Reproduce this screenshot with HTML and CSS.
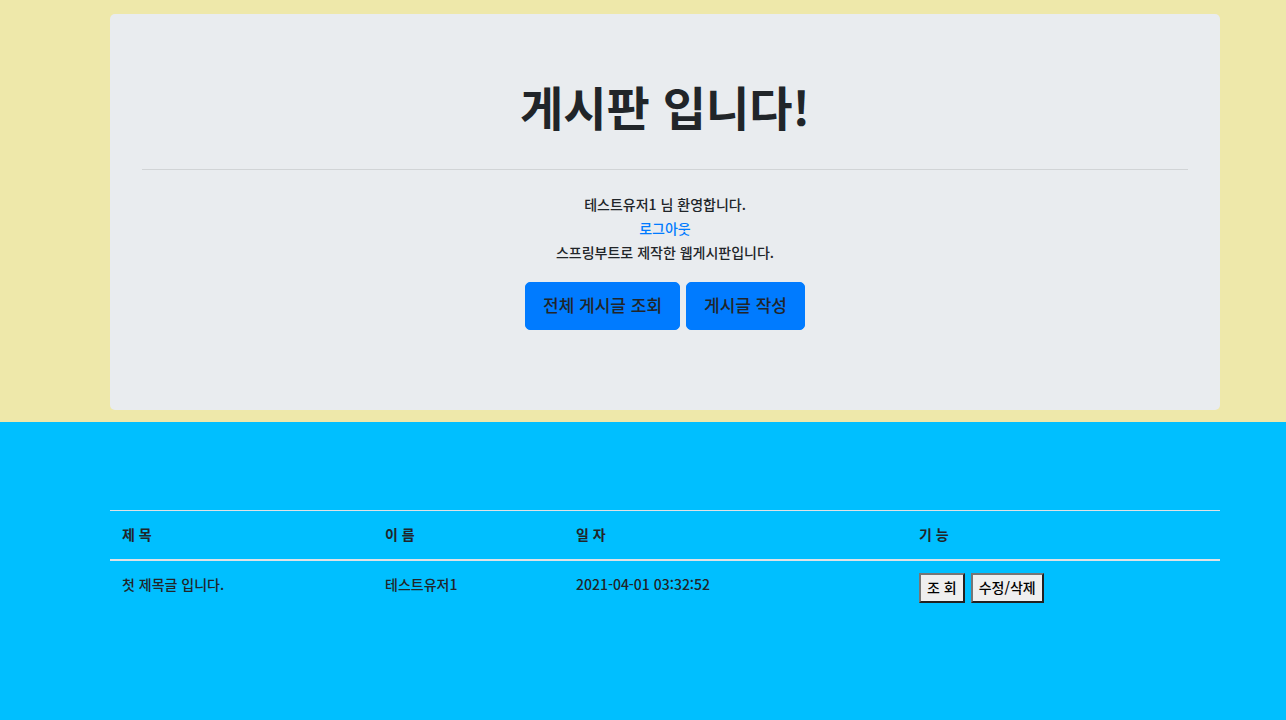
FILE: index.html
```html
<!DOCTYPE html>
<html lang="ko">
    <head>
        <meta charset="utf-8">
        <meta name="viewport" content="width=device-width, initial-scale=1">
        <title>게시판</title>
        <link rel="stylesheet" href="styles.css">
    </head>
    <body>
        <header class="top">
            <div class="jumbotron">
                <h1>게시판 입니다!</h1>
                <hr>
                <div class="welcome">
                    <div>테스트유저1 님 환영합니다.</div>
                    <div><a href="#logout">로그아웃</a></div>
                    <div>스프링부트로 제작한 웹게시판입니다.</div>
                </div>
                <div class="actions">
                    <button type="button" class="btn">전체 게시글 조회</button>
                    <button type="button" class="btn">게시글 작성</button>
                </div>
            </div>
        </header>
        <main class="board">
            <table class="table">
                <thead>
                    <tr>
                        <th class="col-title">제 목</th>
                        <th class="col-name">이 름</th>
                        <th class="col-date">일 자</th>
                        <th>기 능</th>
                    </tr>
                </thead>
                <tbody>
                    <tr>
                        <td>첫 제목글 입니다.</td>
                        <td>테스트유저1</td>
                        <td>2021-04-01 03:32:52</td>
                        <td>
                            <div class="tools">
                                <button type="button">조 회</button>
                                <button type="button">수정/삭제</button>
                            </div>
                        </td>
                    </tr>
                </tbody>
            </table>
        </main>
    </body>
</html>
```
FILE: styles.css
```css
* {
    box-sizing: border-box;
}
body {
    display: flex;
    flex-direction: column;
    min-height: 100vh;
    margin: 0;
    background: deepskyblue;
    color: #212529;
    font-family: 'Noto Sans CJK KR', sans-serif;
    font-size: 14px;
    font-weight: 500;
    line-height: 24px;
}
button {
    font: inherit;
}
.top {
    padding: 14px 66px 12px 110px;
    background: palegoldenrod;
}
.jumbotron {
    padding: 64px 32px 80px;
    border-radius: 5px;
    background: #e9ecef;
    text-align: center;
}
.jumbotron h1 {
    margin: 0;
    padding-bottom: 11px;
    font-size: 47px;
    font-weight: 700;
    line-height: 56px;
}
.jumbotron hr {
    margin: 24px 0 22px;
    border: 0;
    border-top: 1px solid rgba(0,0,0,.1);
}
.welcome a {
    color: #007bff;
    text-decoration: none;
}
.actions {
    display: flex;
    justify-content: center;
    gap: 6px;
    margin-top: 18px;
}
.btn {
    padding: 7px 17px 9px;
    border: 1px solid #007bff;
    border-radius: 5px;
    background: #007bff;
    color: #212529;
    font-size: 17px;
    line-height: 30px;
    cursor: pointer;
}
.board {
    flex: 1;
    padding: 88px 66px 0 110px;
}
.table {
    width: 100%;
    border-collapse: separate;
    border-spacing: 0;
    table-layout: fixed;
}
.table th,
.table td {
    padding: 11px 12px 13px;
    text-align: left;
    vertical-align: top;
}
.table th {
    border-top: 1px solid #dee2e6;
    border-bottom: 2px solid #dee2e6;
    font-weight: 700;
}
.col-title {
    width: 23.7%;
}
.col-name {
    width: 17.2%;
}
.col-date {
    width: 30.9%;
}
.tools {
    display: flex;
    gap: 6px;
    padding-top: 1px;
}
.tools button {
    padding: 0 6px 2px;
    border: 2px outset #767676;
    background: #efefef;
    color: #000;
}
```
